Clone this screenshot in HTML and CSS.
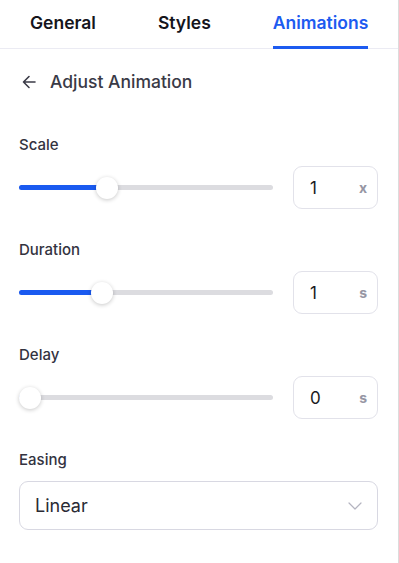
FILE: index.html
```html
<!DOCTYPE html>
<html>
<head>
<meta charset="utf-8">
<link rel="stylesheet" href="styles.css">
</head>
<body>
<div class="panel">
  <nav class="tabs">
    <div class="tab">General</div>
    <div class="tab">Styles</div>
    <div class="tab active">Animations</div>
  </nav>
  <div class="back">
    <svg class="arrow" width="14" height="14" viewBox="0 0 14 14"><path d="M13 7H1.5M7 1.5L1.5 7 7 12.5" fill="none" stroke="#3b3b47" stroke-width="1.6" stroke-linecap="round" stroke-linejoin="round"/></svg>
    <span>Adjust Animation</span>
  </div>
  <div class="content">
    <div class="field">
      <div class="label">Scale</div>
      <div class="row">
        <div class="track" style="--p: 0.333"><div class="fill"></div><div class="thumb"></div></div>
        <div class="num"><span class="val">1</span><span class="unit">x</span></div>
      </div>
    </div>
    <div class="field">
      <div class="label">Duration</div>
      <div class="row">
        <div class="track" style="--p: 0.31"><div class="fill"></div><div class="thumb"></div></div>
        <div class="num"><span class="val">1</span><span class="unit">s</span></div>
      </div>
    </div>
    <div class="field">
      <div class="label">Delay</div>
      <div class="row">
        <div class="track" style="--p: 0"><div class="fill"></div><div class="thumb"></div></div>
        <div class="num"><span class="val">0</span><span class="unit">s</span></div>
      </div>
    </div>
    <div class="field">
      <div class="label">Easing</div>
      <div class="select">
        <span>Linear</span>
        <svg width="14" height="8" viewBox="0 0 14 8"><path d="M1 1l6 6 6-6" fill="none" stroke="#b4b4c0" stroke-width="1.2" stroke-linecap="round" stroke-linejoin="round"/></svg>
      </div>
    </div>
  </div>
</div>
</body>
</html>
```
FILE: styles.css
```css
* { box-sizing: border-box; }
html, body { margin: 0; padding: 0; background: #fff; }
body { font-family: Inter, "Noto Sans", sans-serif; color: #2f2f3a; }
.panel {
  width: 399px;
  height: 563px;
  border-right: 1px solid #dcdcdc;
}
.tabs {
  display: flex;
  gap: 62px;
  padding-left: 30px;
  height: 49px;
  border-bottom: 1px solid #ebebf3;
}
.tab {
  display: flex;
  align-items: center;
  font-size: 17.5px;
  font-weight: 600;
  color: #15151c;
  padding-bottom: 2px;
  margin-bottom: -1px;
  border-bottom: 3px solid transparent;
}
.tab.active {
  color: #1d5bf0;
  border-bottom-color: #1d5bf0;
}
.back {
  display: flex;
  align-items: center;
  gap: 14px;
  padding: 21px 0 0 22px;
  height: 45px;
  font-size: 17.5px;
  font-weight: 500;
  color: #3a3a46;
}
.back span { line-height: 24px; }
.content {
  padding: 41px 20px 0 19px;
}
.field { margin-bottom: 31px; }
.label {
  font-size: 15px;
  font-weight: 500;
  line-height: 20px;
  color: #33333f;
  margin-bottom: 11px;
}
.row {
  display: flex;
  align-items: center;
  gap: 20px;
}
.track {
  position: relative;
  flex: 1;
  height: 5px;
  border-radius: 3px;
  background: #dcdce0;
}
.fill {
  position: absolute;
  left: 0;
  top: 0;
  height: 100%;
  width: calc(var(--p) * (100% - 22px) + 11px);
  border-radius: 3px;
  background: #1a5af0;
}
.thumb {
  position: absolute;
  top: 50%;
  left: calc(var(--p) * (100% - 22px));
  width: 22px;
  height: 22px;
  margin-top: -11px;
  border-radius: 50%;
  background: #fff;
  box-shadow: 0 1px 4px rgba(0,0,0,0.22);
}
.num {
  width: 85px;
  height: 43px;
  border: 1px solid #e2e2ea;
  border-radius: 9px;
  display: flex;
  align-items: center;
  justify-content: space-between;
  padding: 0 10px 0 16px;
}
.val { font-size: 17px; color: #1a1a22; }
.unit { font-size: 14px; font-weight: 700; color: #9696a4; }
.select {
  height: 49px;
  border: 1px solid #d8d8e2;
  border-radius: 9px;
  display: flex;
  align-items: center;
  justify-content: space-between;
  padding: 0 15px 0 15px;
  font-size: 18px;
  color: #2a2a34;
}
```
